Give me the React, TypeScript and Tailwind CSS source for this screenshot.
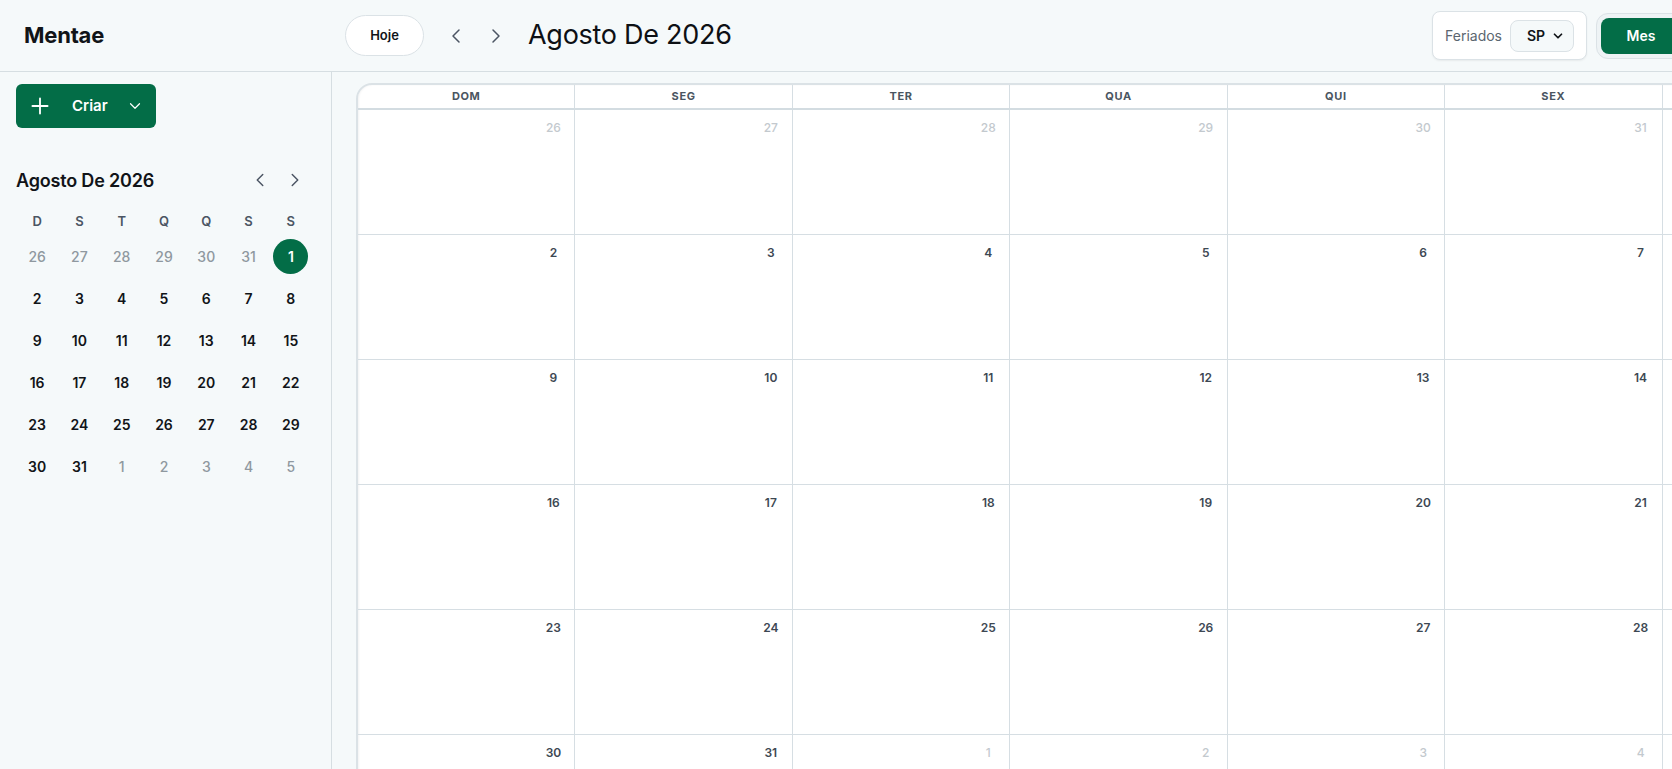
import React from 'react';
import { Plus, ChevronDown, ChevronLeft, ChevronRight } from 'lucide-react';

const GREEN = 'bg-[#036d47]';

const weekHeaders = ['DOM', 'SEG', 'TER', 'QUA', 'QUI', 'SEX', 'SÁB'];
const miniHeaders = ['D', 'S', 'T', 'Q', 'Q', 'S', 'S'];

// august 2026 starts on saturday
const buildMonth = () => {
  const days: { day: number; current: boolean }[] = [];
  for (let d = 26; d <= 31; d++) days.push({ day: d, current: false });
  for (let d = 1; d <= 31; d++) days.push({ day: d, current: true });
  let next = 1;
  while (days.length < 42) days.push({ day: next++, current: false });
  return days;
};

const month = buildMonth();
const weeks = Array.from({ length: 6 }, (_, i) => month.slice(i * 7, i * 7 + 7));

const MiniCalendar = () => (
  <div className="mt-10">
    <div className="flex items-center h-6">
      <h2 className="text-[18px] font-semibold text-[#111418] tracking-[-0.01em]">Agosto De 2026</h2>
      <div className="ml-auto flex items-center gap-[13px] pr-[9px] text-[#4b5563]">
        <ChevronLeft size={22} strokeWidth={1.6} />
        <ChevronRight size={22} strokeWidth={1.6} />
      </div>
    </div>
    <div className="grid grid-cols-7 w-[296px] mt-[17px]">
      {miniHeaders.map((h, i) => (
        <div key={i} className="h-[26px] flex items-center justify-center text-[13px] font-semibold text-[#4b5563]">
          {h}
        </div>
      ))}
      {month.map((d, i) => {
        const selected = d.current && d.day === 1;
        return (
          <div key={i} className="h-[42px] flex items-center justify-center">
            {selected ? (
              <span className={`w-[35px] h-[35px] rounded-full ${GREEN} text-white flex items-center justify-center text-[14px] font-semibold`}>
                {d.day}
              </span>
            ) : (
              <span className={`text-[14px] ${d.current ? 'font-semibold text-[#111418]' : 'font-medium text-[#8f989f]'}`}>
                {d.day}
              </span>
            )}
          </div>
        );
      })}
    </div>
  </div>
);

export default function App() {
  return (
    <div className="w-screen h-screen overflow-hidden bg-[#f5f9fa]">
      <div className="w-[1906px] h-full flex flex-col font-['Inter',sans-serif] text-[#111418]">
        <header className="h-[72px] shrink-0 flex items-center border-b border-[#d6dee2] pr-6">
          <div className="w-[332px] shrink-0 pl-[24px] text-[22px] font-bold tracking-[-0.01em]">Mentae</div>
          <button className="ml-[13px] h-[41px] w-[79px] rounded-full bg-white border border-[#dbe2e6] text-[13px] font-semibold">
            Hoje
          </button>
          <div className="ml-5 flex items-center gap-4 text-[#4b5563]">
            <ChevronLeft size={24} strokeWidth={1.5} />
            <ChevronRight size={24} strokeWidth={1.5} />
          </div>
          <h1 className="ml-5 text-[27px] font-normal tracking-[-0.01em] text-[#0d1014]">Agosto De 2026</h1>

          <div className="ml-auto flex items-center gap-[9px]">
            <div className="h-[49px] flex items-center gap-2 pl-3 pr-3 bg-white border border-[#dbe2e6] rounded-lg shadow-[0_1px_2px_rgba(0,0,0,0.06)]">
              <span className="text-[14px] text-[#5b6670]">Feriados</span>
              <div className="h-[32px] w-[64px] flex items-center justify-between pl-[16px] pr-[8px] rounded-lg bg-[#f5f9fa] border border-[#dbe2e6]">
                <span className="text-[14px] font-semibold">SP</span>
                <ChevronDown size={14} strokeWidth={3} />
              </div>
            </div>
            <div className="h-[46px] flex items-center gap-1 p-[4px] rounded-xl bg-[#eef3f5] border border-[#dbe2e6]">
              <button className={`h-[36px] w-[80px] rounded-lg ${GREEN} text-white text-[14px] font-semibold`}>Mes</button>
              <button className="h-[36px] w-[108px] rounded-lg text-[#4b5563] text-[14px] font-semibold">Semana</button>
              <button className="h-[36px] w-[80px] rounded-lg text-[#4b5563] text-[14px] font-semibold">Dia</button>
            </div>
          </div>
        </header>

        <div className="flex flex-1 min-h-0">
          <aside className="w-[332px] shrink-0 border-r border-[#d6dee2] px-4 pt-3">
            <button className={`h-[44px] w-[140px] rounded-md ${GREEN} text-white flex items-center pl-[11px] pr-[12px]`}>
              <Plus size={26} strokeWidth={1.7} />
              <span className="ml-[19px] text-[15px] font-semibold">Criar</span>
              <ChevronDown size={18} strokeWidth={1.6} className="ml-auto" />
            </button>
            <MiniCalendar />
          </aside>

          <main className="flex-1 min-w-0 pl-6 pt-[11px] overflow-hidden">
            <div className="w-[1526px] bg-white border-2 border-[#dbe2e6] rounded-t-2xl shadow-[inset_1px_0_2px_rgba(0,0,0,0.05)] overflow-hidden">
              <div className="grid grid-cols-7 h-[25px] border-b-2 border-[#d3dce1]">
                {weekHeaders.map((h, i) => (
                  <div
                    key={h}
                    className={`flex items-center justify-center text-[11px] font-bold tracking-[0.06em] text-[#4a5561] ${i < 6 ? 'border-r border-[#d6dee3]' : ''}`}
                  >
                    {h}
                  </div>
                ))}
              </div>
              {weeks.map((week, wi) => (
                <div key={wi} className="grid grid-cols-7 h-[125px] border-b border-[#d6dee3]">
                  {week.map((d, di) => (
                    <div
                      key={di}
                      className={`flex justify-end items-start pt-[4px] pr-[7px] ${di < 6 ? 'border-r border-[#d6dee3]' : ''}`}
                    >
                      <span
                        className={`w-7 h-7 flex items-center justify-center text-[12px] ${d.current ? 'font-semibold text-[#3d4853]' : 'font-medium text-[#c3c9ce]'}`}
                      >
                        {d.day}
                      </span>
                    </div>
                  ))}
                </div>
              ))}
            </div>
          </main>
        </div>
      </div>
    </div>
  );
}
